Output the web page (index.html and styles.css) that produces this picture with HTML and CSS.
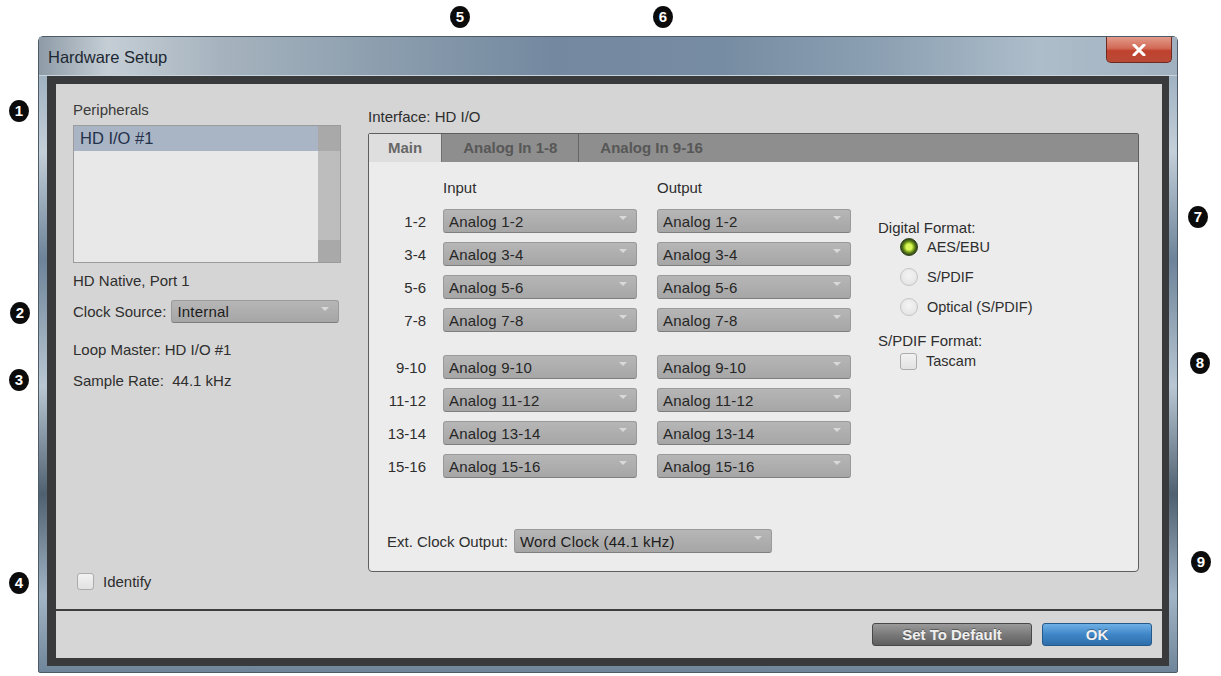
FILE: index.html
```html
<!DOCTYPE html>
<html lang="en">
  <head>
    <meta charset="UTF-8">
    <meta name="viewport" content="width=device-width, initial-scale=1.0">
    <title>Hardware Setup</title>
    <link rel="stylesheet" href="styles.css">
  </head>
  <body>
    <div class="page">

      <!-- Callout numbers round the dialog -->
      <span class="callout c1">1</span>
      <span class="callout c2">2</span>
      <span class="callout c3">3</span>
      <span class="callout c4">4</span>
      <span class="callout c5">5</span>
      <span class="callout c6">6</span>
      <span class="callout c7">7</span>
      <span class="callout c8">8</span>
      <span class="callout c9">9</span>

      <!-- Dialog window -->
      <div class="window">
        <div class="titlebar">
          <span class="title">Hardware Setup</span>
          <button class="close" aria-label="Close">
            <svg width="14" height="12" viewBox="0 0 14 12">
              <path d="M2 1 L12 11 M12 1 L2 11" stroke="#ffffff" stroke-width="3" stroke-linecap="round"/>
            </svg>
          </button>
        </div>

        <div class="frame">
          <div class="main">

            <!-- Left column: peripherals -->
            <div class="left-col">
              <div class="label">Peripherals</div>
              <div class="listbox">
                <div class="list-items">
                  <div class="list-item selected">HD I/O #1</div>
                </div>
                <div class="scrollbar">
                  <div class="sb-end"></div>
                  <div class="sb-track"></div>
                  <div class="sb-end"></div>
                </div>
              </div>
              <div class="port">HD Native, Port 1</div>
              <div class="clock-row">
                <span>Clock Source:</span>
                <div class="dropdown dd-clock">Internal</div>
              </div>
              <div class="info loop">Loop Master: HD I/O #1</div>
              <div class="info rate">Sample Rate:&nbsp; 44.1 kHz</div>
              <div class="identify">
                <span class="checkbox"></span>
                <span>Identify</span>
              </div>
            </div>

            <!-- Right column: interface tabs -->
            <div class="right-col">
              <div class="iface">Interface: HD I/O</div>
              <div class="tabpanel">
                <div class="tabs">
                  <div class="tab active">Main</div>
                  <div class="tab">Analog In 1-8</div>
                  <div class="tab">Analog In 9-16</div>
                </div>
                <div class="tab-body">
                  <div class="io-area">
                    <div class="io-grid">
                      <div class="io-row io-head">
                        <span></span>
                        <span>Input</span>
                        <span>Output</span>
                      </div>
                      <div class="io-row">
                        <span class="ch">1-2</span>
                        <div class="dropdown">Analog 1-2</div>
                        <div class="dropdown">Analog 1-2</div>
                      </div>
                      <div class="io-row">
                        <span class="ch">3-4</span>
                        <div class="dropdown">Analog 3-4</div>
                        <div class="dropdown">Analog 3-4</div>
                      </div>
                      <div class="io-row">
                        <span class="ch">5-6</span>
                        <div class="dropdown">Analog 5-6</div>
                        <div class="dropdown">Analog 5-6</div>
                      </div>
                      <div class="io-row">
                        <span class="ch">7-8</span>
                        <div class="dropdown">Analog 7-8</div>
                        <div class="dropdown">Analog 7-8</div>
                      </div>
                      <div class="io-row group-start">
                        <span class="ch">9-10</span>
                        <div class="dropdown">Analog 9-10</div>
                        <div class="dropdown">Analog 9-10</div>
                      </div>
                      <div class="io-row">
                        <span class="ch">11-12</span>
                        <div class="dropdown">Analog 11-12</div>
                        <div class="dropdown">Analog 11-12</div>
                      </div>
                      <div class="io-row">
                        <span class="ch">13-14</span>
                        <div class="dropdown">Analog 13-14</div>
                        <div class="dropdown">Analog 13-14</div>
                      </div>
                      <div class="io-row">
                        <span class="ch">15-16</span>
                        <div class="dropdown">Analog 15-16</div>
                        <div class="dropdown">Analog 15-16</div>
                      </div>
                    </div>

                    <div class="formats">
                      <div class="fmt-title">Digital Format:</div>
                      <div class="opt"><span class="radio on"></span>AES/EBU</div>
                      <div class="opt"><span class="radio"></span>S/PDIF</div>
                      <div class="opt"><span class="radio"></span>Optical (S/PDIF)</div>
                      <div class="fmt-title spdif">S/PDIF Format:</div>
                      <div class="opt"><span class="checkbox"></span>Tascam</div>
                    </div>
                  </div>

                  <div class="ext-clock">
                    <span>Ext. Clock Output:</span>
                    <div class="dropdown dd-ext">Word Clock (44.1 kHz)</div>
                  </div>
                </div>
              </div>
            </div>
          </div>

          <!-- Footer buttons -->
          <div class="footer">
            <button class="btn btn-default">Set To Default</button>
            <button class="btn btn-ok">OK</button>
          </div>
        </div>
      </div>
    </div>
  </body>
</html>
```

FILE: styles.css
```css
/* Hardware Setup dialog */
* {
  box-sizing: border-box;
}

body {
  margin: 0;
  background: #ffffff;
  font-family: "Liberation Sans", Arial, sans-serif;
  font-size: 15px;
  color: #2e2e2e;
}

.page {
  position: relative;
  width: 1221px;
  height: 676px;
  overflow: hidden;
  padding: 36px 0 0 38px;
}

/* Callouts */
.callout {
  position: absolute;
  width: 20px;
  height: 22px;
  border-radius: 50%;
  background: #0b0b0b;
  color: #ffffff;
  font-weight: bold;
  font-size: 15px;
  line-height: 22px;
  text-align: center;
}

.c1 { left: 9px; top: 100px; }
.c2 { left: 10px; top: 302px; }
.c3 { left: 9px; top: 369px; }
.c4 { left: 9px; top: 572px; }
.c5 { left: 450px; top: 6px; }
.c6 { left: 653px; top: 6px; }
.c7 { left: 1188px; top: 206px; }
.c8 { left: 1190px; top: 352px; }
.c9 { left: 1191px; top: 551px; }

/* Window frame */
.window {
  width: 1140px;
  height: 637px;
  display: flex;
  flex-direction: column;
  border: 1px solid #4d5b67;
  border-radius: 5px 5px 2px 2px;
  background: linear-gradient(180deg, #8fa3b5 0%, #c3cfd9 18%, #6d8399 35%, #b9c7d3 55%, #4f6070 72%, #a2b5c6 88%, #6f8599 100%);
}

.titlebar {
  height: 39px;
  display: flex;
  justify-content: space-between;
  align-items: center;
  background: linear-gradient(90deg, #8e9ba6 0%, #c5ced5 6%, #a6b3be 16%, #8c9eae 30%, #7489a0 45%, #768ca2 60%, #8ea2b4 75%, #aebdca 88%, #a0b0bf 100%);
  border-bottom: 1px solid #c9d4dc;
}

.title {
  padding-left: 9px;
  padding-top: 2px;
  font-size: 16.5px;
  color: #1d2833;
}

.close {
  align-self: flex-start;
  width: 66px;
  height: 26px;
  margin-right: 5px;
  padding: 0;
  display: flex;
  align-items: center;
  justify-content: center;
  border: 1px solid #6e2a20;
  border-top: none;
  border-radius: 0 0 5px 5px;
  background: linear-gradient(180deg, #e39a8a 0%, #d26a56 45%, #c0422e 55%, #b84a36 100%);
}

.frame {
  flex: 1;
  margin: 0 8px 6px;
  display: flex;
  flex-direction: column;
  border: 8px solid #383a3b;
  border-left-width: 9px;
  border-right-width: 7px;
  background: #d5d5d5;
}

/* Main area */
.main {
  height: 527px;
  display: grid;
  grid-template-columns: 268px 1fr;
  column-gap: 27px;
  padding: 18px 23px 19px 17px;
  border-bottom: 2px solid #3d3d3d;
}

.left-col {
  display: flex;
  flex-direction: column;
}

.label {
  line-height: 16px;
  margin-bottom: 7px;
  color: #3a3a3a;
}

.listbox {
  height: 138px;
  display: flex;
  border: 1px solid #9b9b9b;
  background: #e8e8e8;
}

.list-items {
  flex: 1;
}

.list-item {
  height: 25px;
  padding-left: 6px;
  font-size: 16.5px;
  line-height: 25px;
  color: #24314a;
}

.list-item.selected {
  background: #a9b4c5;
}

.scrollbar {
  width: 22px;
  display: flex;
  flex-direction: column;
  background: #bdbdbd;
}

.sb-end {
  height: 25px;
  background: #a9a9a9;
}

.sb-end:last-child {
  height: 22px;
}

.sb-track {
  flex: 1;
}

.port {
  margin-top: 10px;
  line-height: 16px;
}

.clock-row {
  margin-top: 11px;
  display: flex;
  align-items: center;
  gap: 5px;
}

.info {
  line-height: 16px;
}

.loop {
  margin-top: 19px;
}

.rate {
  margin-top: 15px;
}

.identify {
  margin-top: auto;
  display: flex;
  align-items: center;
  gap: 9px;
  padding-left: 4px;
}

.checkbox {
  width: 17px;
  height: 17px;
  border: 1px solid #acacac;
  border-radius: 3px;
  background: linear-gradient(180deg, #f2f2f2, #e2e2e2);
}

/* Dropdowns */
.dropdown {
  position: relative;
  width: 194px;
  height: 24px;
  padding-left: 5px;
  line-height: 23px;
  border-radius: 3px;
  border: 1px solid #9a9a9a;
  border-bottom-color: #7e7e7e;
  background: linear-gradient(180deg, #b6b6b6 0%, #a6a6a6 100%);
  color: #262626;
  letter-spacing: 0.2px;
}

.dropdown::after {
  content: "";
  position: absolute;
  right: 9px;
  top: 6px;
  border-left: 4px solid transparent;
  border-right: 4px solid transparent;
  border-top: 4px solid #d9d9d9;
}

.dd-clock {
  width: 168px;
  height: 23px;
  line-height: 22px;
  color: #1c1c1c;
}

.dd-ext {
  width: 258px;
  color: #1c1c1c;
}

/* Right column */
.right-col {
  padding-top: 7px;
  display: flex;
  flex-direction: column;
}

.iface {
  line-height: 16px;
  margin-bottom: 8px;
}

.tabpanel {
  height: 439px;
  display: flex;
  flex-direction: column;
  border: 1px solid #5e5e5e;
  border-radius: 2px 2px 4px 4px;
  background: #ececec;
}

.tabs {
  height: 28px;
  display: flex;
  background: #8e8e8e;
}

.tab {
  padding: 0 21px 0 21px;
  line-height: 28px;
  font-weight: bold;
  color: #575757;
  border-right: 1px solid #666666;
}

.tab:last-child {
  border-right: none;
}

.tab.active {
  padding: 0 19px;
  background: #dedede;
  color: #686868;
  border-right-color: #707070;
}

.tab-body {
  flex: 1;
  padding: 18px 0 0 18px;
}

.io-area {
  display: flex;
}

.io-grid {
  display: flex;
  flex-direction: column;
  gap: 9px;
}

.io-row {
  display: grid;
  grid-template-columns: 56px 214px 194px;
  align-items: center;
}

.io-head {
  line-height: 16px;
  margin-bottom: 4px;
}

.group-start {
  margin-top: 14px;
}

.ch {
  text-align: right;
  padding-right: 17px;
}

/* Digital format options */
.formats {
  margin-left: 27px;
  margin-top: 40px;
}

.fmt-title {
  line-height: 15px;
}

.fmt-title.spdif {
  margin-top: 14px;
  line-height: 16px;
}

.opt {
  height: 24px;
  margin-top: 6px;
  display: flex;
  align-items: center;
  gap: 9px;
  padding-left: 22px;
  font-size: 14.5px;
}

.fmt-title + .opt {
  margin-top: 0;
}

.radio {
  width: 18px;
  height: 18px;
  border-radius: 50%;
  border: 1px solid #c4c4c4;
  background: radial-gradient(circle at 50% 40%, #f4f4f4, #e0e0e0);
}

.radio.on {
  border-color: #2d3f14;
  background: radial-gradient(circle, #d8f55a 0 3px, #a6cf2a 4px, #5b7d1c 6px, #33481a 8px);
}

.ext-clock {
  margin-top: 51px;
  display: flex;
  align-items: center;
  gap: 6px;
}

/* Footer */
.footer {
  flex: 1;
  display: flex;
  justify-content: flex-end;
  align-items: center;
  gap: 10px;
  padding-right: 10px;
  background: #d6d6d6;
}

.btn {
  height: 23px;
  padding: 0;
  border-radius: 3px;
  font-family: "Liberation Sans", Arial, sans-serif;
  font-size: 15px;
  font-weight: bold;
  color: #f0f0f0;
  text-shadow: 0 -1px 0 rgba(0, 0, 0, 0.35);
}

.btn-default {
  width: 160px;
  border: 1px solid #484848;
  background: linear-gradient(180deg, #9a9a9a 0%, #7a7a7a 50%, #5e5e5e 100%);
}

.btn-ok {
  width: 110px;
  border: 1px solid #25598a;
  background: linear-gradient(180deg, #6fb0e6 0%, #3f86c8 50%, #2d6eaa 100%);
}
```
